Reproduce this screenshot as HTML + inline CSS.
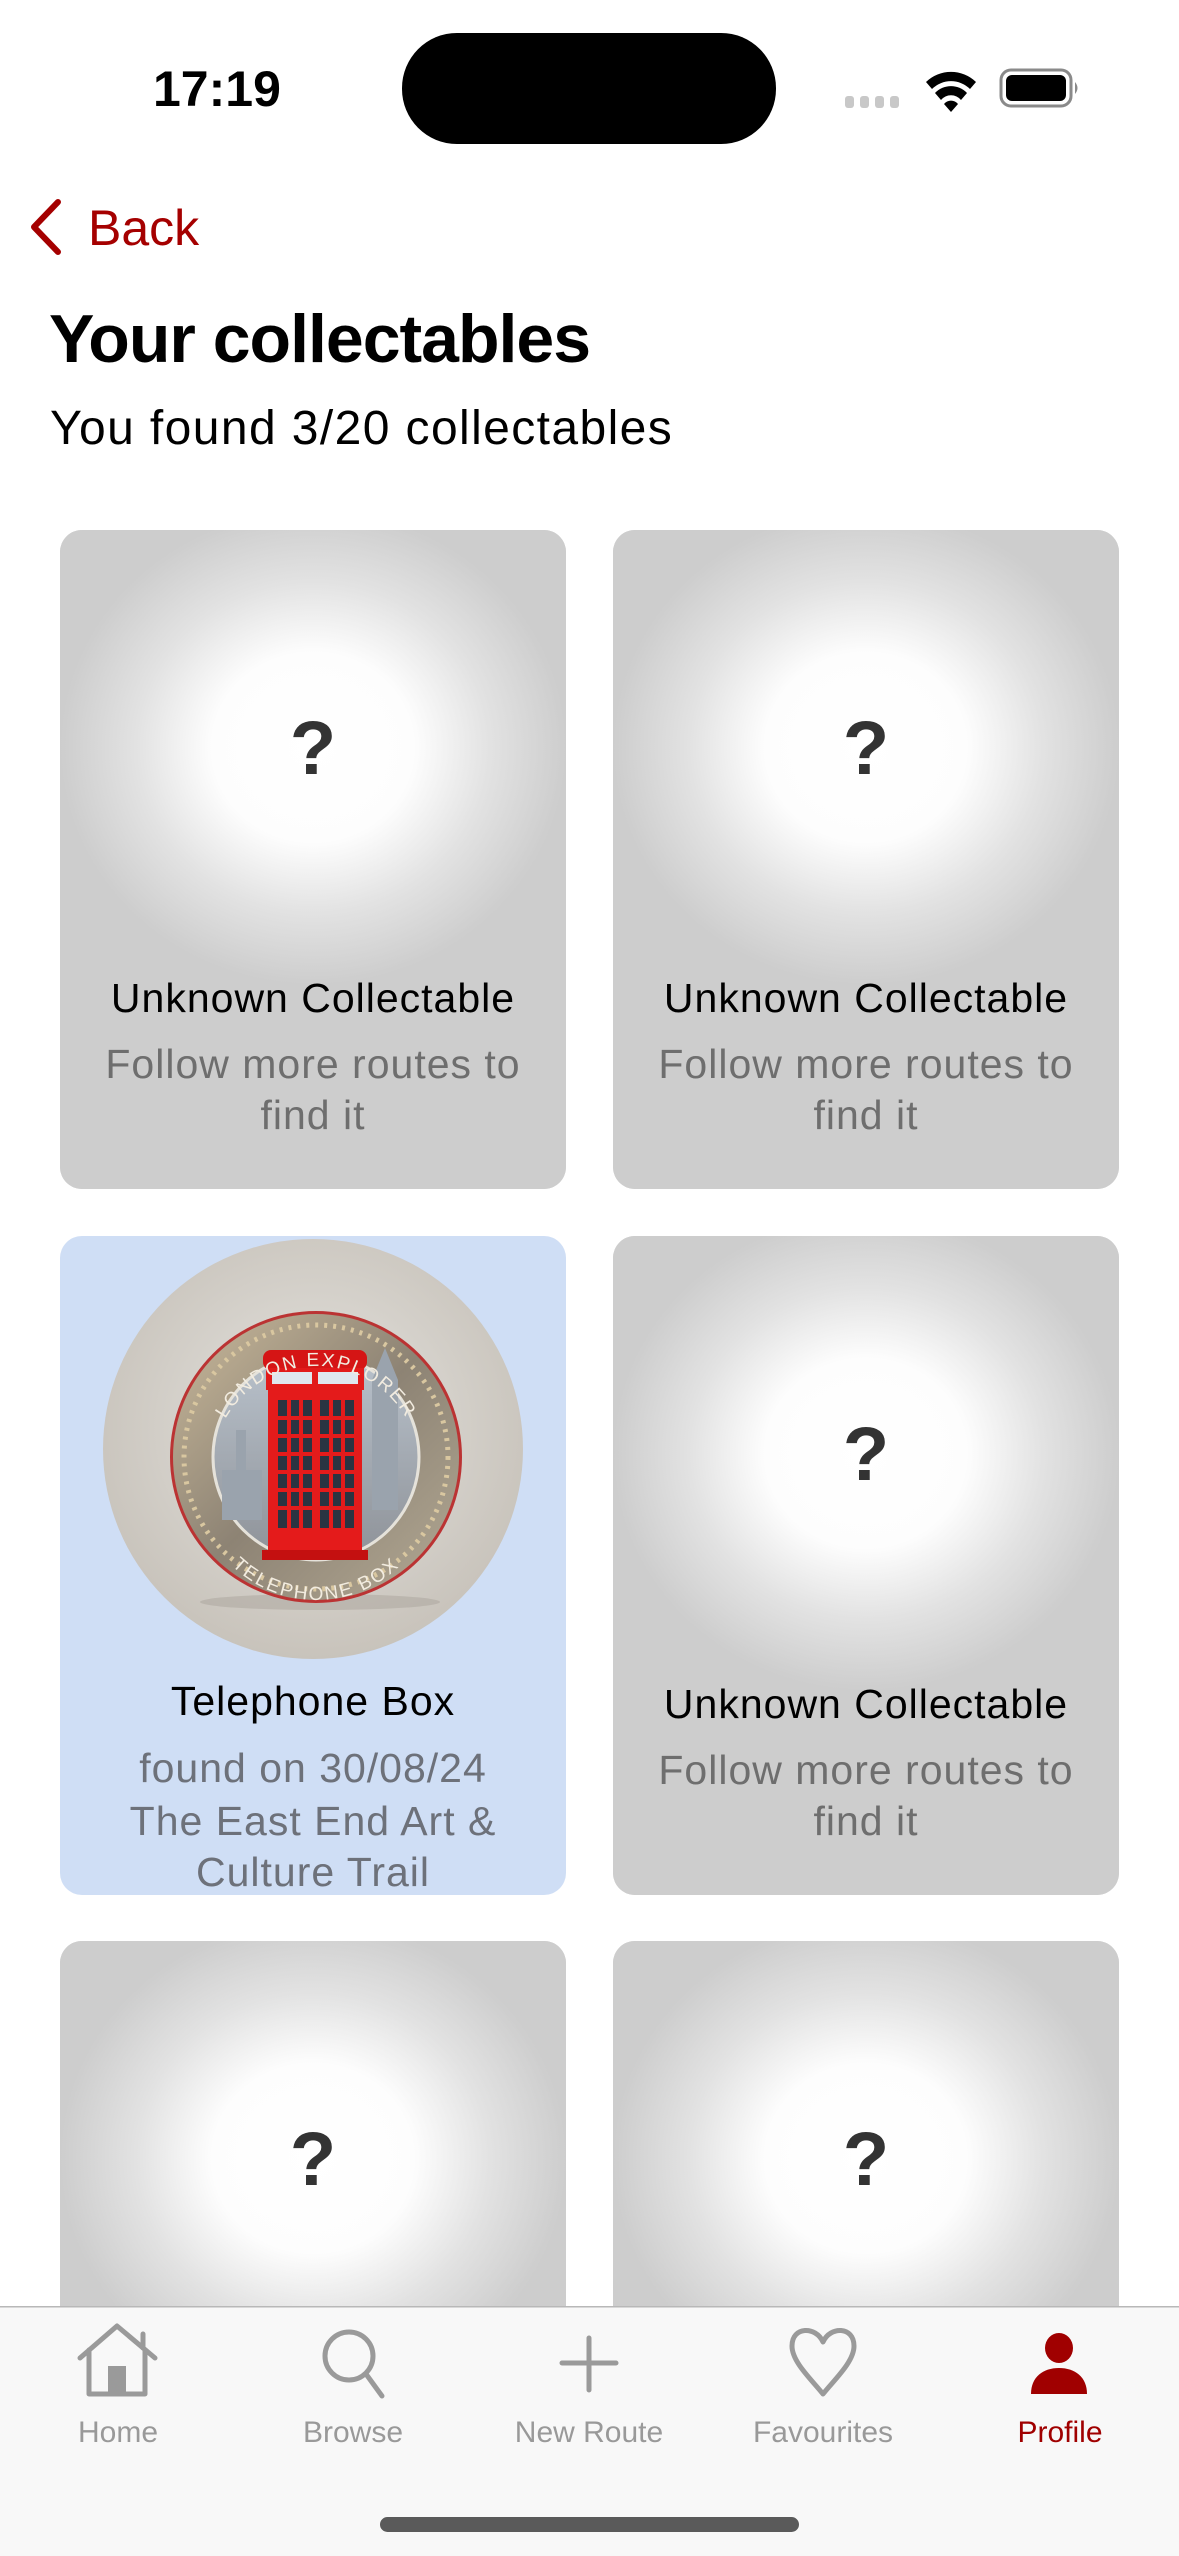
<!DOCTYPE html>
<html><head><meta charset="utf-8">
<style>
html,body{margin:0;padding:0;background:#fff;width:1179px;height:2556px;overflow:hidden}
svg{display:block}
text{font-family:"Liberation Sans",sans-serif}
</style></head>
<body>
<svg width="1179" height="2556" viewBox="0 0 1179 2556" xmlns="http://www.w3.org/2000/svg">
<defs>
  <radialGradient id="glow" cx="50%" cy="33%" r="50%" fx="50%" fy="33%" gradientTransform="translate(0.5 0.33) scale(1.0 0.72) translate(-0.5 -0.33)">
    <stop offset="0" stop-color="#ffffff"/>
    <stop offset="0.4" stop-color="#fdfdfd"/>
    <stop offset="0.7" stop-color="#e2e2e2"/>
    <stop offset="1" stop-color="#cdcdcd"/>
  </radialGradient>
  <symbol id="unk" viewBox="0 0 506 659">
    <rect x="0" y="0" width="506" height="659" rx="22" fill="#cdcdcd"/>
    <rect x="0" y="0" width="506" height="659" rx="22" fill="url(#glow)"/>
  </symbol>
  <radialGradient id="cbg" cx="50%" cy="45%" r="55%">
    <stop offset="0" stop-color="#e6e4e0"/>
    <stop offset="1" stop-color="#c8c3bb"/>
  </radialGradient>
  <linearGradient id="ring" x1="0" y1="0" x2="1" y2="1">
    <stop offset="0" stop-color="#c9b99b"/>
    <stop offset="0.5" stop-color="#8d8374"/>
    <stop offset="1" stop-color="#b3a994"/>
  </linearGradient>
  <linearGradient id="inner" x1="0" y1="0" x2="0" y2="1">
    <stop offset="0" stop-color="#b9c2cc"/>
    <stop offset="1" stop-color="#8e9298"/>
  </linearGradient>
  <path id="topArc" d="M 212 1470 A 104 104 0 0 1 420 1470"/>
  <path id="botArc" d="M 196 1480 A 120 120 0 0 0 436 1480"/>
</defs>

<!-- status bar -->
<text x="153" y="106" font-size="50" font-weight="bold" fill="#000">17:19</text>
<rect x="402" y="33" width="374" height="111" rx="55" fill="#000"/>
<g fill="#c8c8c8">
  <rect x="845" y="96" width="9" height="12" rx="3"/>
  <rect x="860" y="96" width="9" height="12" rx="3"/>
  <rect x="875" y="96" width="9" height="12" rx="3"/>
  <rect x="890" y="96" width="9" height="12" rx="3"/>
</g>
<g fill="#000">
  <path d="M926 82 A36 36 0 0 1 976 82 L970 89 A27 27 0 0 0 932 89 Z"/>
  <path d="M935 93 A22 22 0 0 1 967 93 L961 100 A13 13 0 0 0 941 100 Z"/>
  <path d="M944 104 L951 112 L958 104 A9 9 0 0 0 944 104 Z"/>
</g>
<rect x="1001" y="70" width="70" height="36" rx="10" fill="none" stroke="#8a8a8a" stroke-width="3"/>
<rect x="1006" y="75" width="60" height="26" rx="6" fill="#000"/>
<path d="M1075 82 q5 6 0 12 z" fill="#8a8a8a"/>

<!-- back -->
<path d="M58 202 L34 227 L58 252" fill="none" stroke="#a50000" stroke-width="6" stroke-linecap="round" stroke-linejoin="round"/>
<text x="88" y="245" font-size="50" fill="#a50000">Back</text>

<text x="49" y="362" font-size="68" font-weight="bold" fill="#000" letter-spacing="-1">Your collectables</text>
<text x="50" y="444" font-size="48" fill="#000" letter-spacing="1.4">You found 3/20 collectables</text>

<use href="#unk" x="60" y="530" width="506" height="659"/>
<use href="#unk" x="613" y="530" width="506" height="659"/>
<use href="#unk" x="613" y="1236" width="506" height="659"/>
<use href="#unk" x="60" y="1941" width="506" height="659"/>
<use href="#unk" x="613" y="1941" width="506" height="659"/>

<g font-size="76" font-weight="bold" fill="#333" text-anchor="middle">
  <text x="313" y="774">?</text>
  <text x="866" y="774">?</text>
  <text x="866" y="1480">?</text>
  <text x="313" y="2185">?</text>
  <text x="866" y="2185">?</text>
</g>
<g text-anchor="middle" letter-spacing="1">
  <text x="313" y="1012" font-size="41" fill="#000">Unknown Collectable</text>
  <text x="313" y="1078" font-size="41" fill="#6e6e6e">Follow more routes to</text>
  <text x="313" y="1129" font-size="41" fill="#6e6e6e">find it</text>
  <text x="866" y="1012" font-size="41" fill="#000">Unknown Collectable</text>
  <text x="866" y="1078" font-size="41" fill="#6e6e6e">Follow more routes to</text>
  <text x="866" y="1129" font-size="41" fill="#6e6e6e">find it</text>
  <text x="866" y="1718" font-size="41" fill="#000">Unknown Collectable</text>
  <text x="866" y="1784" font-size="41" fill="#6e6e6e">Follow more routes to</text>
  <text x="866" y="1835" font-size="41" fill="#6e6e6e">find it</text>
</g>

<!-- telephone card -->
<rect x="60" y="1236" width="506" height="659" rx="22" fill="#cfdef5"/>
<circle cx="313" cy="1449" r="210" fill="url(#cbg)"/>
<ellipse cx="320" cy="1602" rx="120" ry="8" fill="#a9a49c" opacity="0.5"/>
<circle cx="316" cy="1457" r="146" fill="#b33" />
<circle cx="316" cy="1457" r="143" fill="url(#ring)"/>
<circle cx="316" cy="1457" r="132" fill="none" stroke="#d9c7a0" stroke-width="5" stroke-dasharray="3 6"/>
<circle cx="316" cy="1457" r="103" fill="url(#inner)" stroke="#e5e2da" stroke-width="3"/>
<g fill="#9aa3ad">
  <rect x="222" y="1470" width="40" height="50"/>
  <rect x="236" y="1430" width="10" height="40"/>
  <rect x="372" y="1380" width="26" height="130"/>
  <polygon points="372,1380 385,1348 398,1380"/>
</g>
<g>
  <rect x="263" y="1350" width="104" height="20" rx="8" fill="#d51515"/>
  <rect x="266" y="1368" width="98" height="22" fill="#e21a1a"/>
  <rect x="272" y="1372" width="40" height="12" fill="#dfe6ee"/>
  <rect x="318" y="1372" width="40" height="12" fill="#dfe6ee"/>
  <rect x="268" y="1390" width="94" height="162" fill="#e41b1b"/>
  <rect x="278" y="1400" width="34" height="128" fill="#2a3442"/>
  <rect x="320" y="1400" width="34" height="128" fill="#2a3442"/>
  <g stroke="#e41b1b" stroke-width="4">
    <line x1="289" y1="1400" x2="289" y2="1528"/><line x1="301" y1="1400" x2="301" y2="1528"/>
    <line x1="331" y1="1400" x2="331" y2="1528"/><line x1="343" y1="1400" x2="343" y2="1528"/>
    <line x1="278" y1="1418" x2="354" y2="1418"/><line x1="278" y1="1436" x2="354" y2="1436"/>
    <line x1="278" y1="1454" x2="354" y2="1454"/><line x1="278" y1="1472" x2="354" y2="1472"/>
    <line x1="278" y1="1490" x2="354" y2="1490"/><line x1="278" y1="1508" x2="354" y2="1508"/>
  </g>
  <rect x="262" y="1550" width="106" height="10" fill="#c41010"/>
</g>
<text font-size="19" font-family="Liberation Serif,serif" fill="#f2ece0" letter-spacing="2"><textPath href="#topArc" startOffset="50%" text-anchor="middle">LONDON EXPLORER</textPath></text>
<text font-size="19" font-family="Liberation Serif,serif" fill="#f2ece0" letter-spacing="2"><textPath href="#botArc" startOffset="50%" text-anchor="middle">TELEPHONE BOX</textPath></text>

<g text-anchor="middle" letter-spacing="1">
  <text x="313" y="1715" font-size="41" fill="#000">Telephone Box</text>
  <text x="313" y="1782" font-size="41" fill="#6d717a">found on 30/08/24</text>
  <text x="313" y="1835" font-size="41" fill="#6d717a">The East End Art &amp;</text>
  <text x="313" y="1886" font-size="41" fill="#6d717a">Culture Trail</text>
</g>

<!-- tab bar -->
<rect x="0" y="2306" width="1179" height="250" fill="#f8f8f8"/>
<rect x="0" y="2306" width="1179" height="1.5" fill="#b8b8b8"/>
<g fill="none" stroke="#9a9a9a" stroke-width="5" stroke-linecap="round" stroke-linejoin="round">
  <path d="M80 2358 L117 2326 L155 2358"/>
  <path d="M89 2350 V2394 H145 V2350"/>
  <path d="M143 2334 V2348"/>
  <circle cx="349" cy="2356" r="24"/>
  <path d="M366 2374 L382 2396"/>
  <path d="M589 2338 V2390 M562 2363 H616"/>
  <path d="M823 2394 C812 2380 792 2362 792 2346 C792 2326 816 2326 823 2342 C830 2326 854 2326 854 2346 C854 2362 834 2380 823 2394 Z"/>
</g>
<rect x="108" y="2366" width="18" height="28" fill="#9a9a9a"/>
<g fill="#a00000">
  <ellipse cx="1059" cy="2348" rx="14" ry="15"/>
  <path d="M1031 2394 C1031 2377 1043 2368 1059 2368 C1075 2368 1087 2377 1087 2394 Z"/>
</g>
<g font-size="30" text-anchor="middle" fill="#999">
  <text x="118" y="2442">Home</text>
  <text x="353" y="2442">Browse</text>
  <text x="589" y="2442">New Route</text>
  <text x="823" y="2442">Favourites</text>
  <text x="1060" y="2442" fill="#a00000">Profile</text>
</g>
<rect x="380" y="2517" width="419" height="15" rx="7.5" fill="#5a5a5a"/>
</svg>
</body></html>
